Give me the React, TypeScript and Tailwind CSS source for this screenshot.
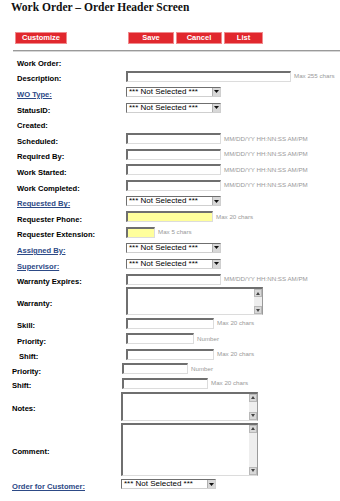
import React from 'react';

const labelFont = { fontFamily: '"Liberation Sans", Arial, sans-serif' };

const Hint = ({ children }: { children: React.ReactNode }) => (
    <span className="ml-[3px] text-[6.2px] leading-none text-[#999999] whitespace-nowrap">{children}</span>
);

const TextBox = ({ w, yellow }: { w: string; yellow?: boolean }) => (
    <div
        className={`${w} h-[11px] border-t-2 border-l-2 border-b border-r border-t-[#6f6f6f] border-l-[#6f6f6f] border-b-[#dcdcdc] border-r-[#dcdcdc] ${
            yellow ? 'bg-[#ffff9c]' : 'bg-white'
        }`}
    />
);

const Select = ({ w = 'w-[95px]' }: { w?: string }) => (
    <div className={`${w} h-[10px] flex items-stretch border border-t-[#6f6f6f] border-l-[#6f6f6f] border-b-[#cfcfcf] border-r-[#cfcfcf] bg-white`}>
        <span className="flex-1 pl-[2px] text-[8px] leading-[8px] text-black whitespace-nowrap overflow-hidden">
            *** Not Selected ***
        </span>
        <span className="w-[8px] bg-[#d8d8d8] border-l border-[#b0b0b0] flex items-center justify-center">
            <svg width="5" height="3" viewBox="0 0 5 3">
                <path d="M0 0h5L2.5 3z" fill="#111" />
            </svg>
        </span>
    </div>
);

const TextArea = ({ h, w }: { h: string; w: string }) => (
    <div className={`${w} ${h} flex border-t-2 border-l-2 border-b border-r border-t-[#6f6f6f] border-l-[#6f6f6f] border-b-[#dcdcdc] border-r-[#9a9a9a] bg-white`}>
        <div className="flex-1" />
        <div className="w-[8px] bg-[#eeeeee] flex flex-col justify-between">
            <span className="h-[8px] bg-[#d8d8d8] border border-[#b8b8b8] flex items-center justify-center">
                <svg width="4" height="3" viewBox="0 0 4 3">
                    <path d="M0 3h4L2 0z" fill="#444" />
                </svg>
            </span>
            <span className="h-[8px] bg-[#d8d8d8] border border-[#b8b8b8] flex items-center justify-center">
                <svg width="4" height="3" viewBox="0 0 4 3">
                    <path d="M0 0h4L2 3z" fill="#444" />
                </svg>
            </span>
        </div>
    </div>
);

const Row = ({
    label,
    link,
    h = 'h-[15.6px]',
    labelW = 'w-[126px]',
    pl = 'pl-[17px]',
    children,
}: {
    label: string;
    link?: boolean;
    h?: string;
    labelW?: string;
    pl?: string;
    children?: React.ReactNode;
}) => (
    <div className={`flex items-center ${h}`}>
        <div className={`${labelW} ${pl} shrink-0`}>
            <span
                className={`text-[7.6px] font-bold leading-none whitespace-nowrap ${
                    link ? 'text-[#2d4a86] underline' : 'text-black'
                }`}
            >
                {label}
            </span>
        </div>
        <div className="flex items-center">{children}</div>
    </div>
);

const RedButton = ({ label, w }: { label: string; w: string }) => (
    <div className={`${w} h-[12px] bg-[#e1272d] border border-[#f08a8d] flex items-center justify-center`}>
        <span className="text-white text-[7.5px] font-bold leading-none">{label}</span>
    </div>
);

export default function App() {
    const date = 'MM/DD/YY HH:NN:SS AM/PM';
    return (
        <div className="w-[340px] h-[501px] bg-white overflow-hidden" style={labelFont}>
            {/* Title */}
            <div className="pl-[11px] pt-[2px] h-[32px]">
                <h1
                    className="text-[11.5px] font-bold leading-[11px] text-[#111]"
                    style={{ fontFamily: '"Liberation Serif", "Times New Roman", serif' }}
                >
                    Work Order – Order Header Screen
                </h1>
            </div>

            {/* Toolbar */}
            <div className="flex h-[12px]">
                <div className="pl-[15px] w-[128px]">
                    <RedButton label="Customize" w="w-[52px]" />
                </div>
                <div className="flex gap-[2px]">
                    <RedButton label="Save" w="w-[46px]" />
                    <RedButton label="Cancel" w="w-[46px]" />
                    <RedButton label="List" w="w-[39px]" />
                </div>
            </div>
            <div className="ml-[13px] mt-[6px] border-t border-b border-t-[#9a9a9a] border-b-[#d6d6d6]" />

            {/* Form */}
            <div className="mt-[1px]">
                <Row label="Work Order:" />
                <Row label="Description:">
                    <TextBox w="w-[165px]" />
                    <Hint>Max 255 chars</Hint>
                </Row>
                <Row label="WO Type:" link>
                    <Select />
                </Row>
                <Row label="StatusID:">
                    <Select />
                </Row>
                <Row label="Created:" />
                <Row label="Scheduled:">
                    <TextBox w="w-[95px]" />
                    <Hint>{date}</Hint>
                </Row>
                <Row label="Required By:">
                    <TextBox w="w-[95px]" />
                    <Hint>{date}</Hint>
                </Row>
                <Row label="Work Started:">
                    <TextBox w="w-[95px]" />
                    <Hint>{date}</Hint>
                </Row>
                <Row label="Work Completed:">
                    <TextBox w="w-[95px]" />
                    <Hint>{date}</Hint>
                </Row>
                <Row label="Requested By:" link>
                    <Select />
                </Row>
                <Row label="Requester Phone:">
                    <TextBox w="w-[87px]" yellow />
                    <Hint>Max 20 chars</Hint>
                </Row>
                <Row label="Requester Extension:">
                    <TextBox w="w-[29px]" yellow />
                    <Hint>Max 5 chars</Hint>
                </Row>
                <Row label="Assigned By:" link>
                    <Select />
                </Row>
                <Row label="Supervisor:" link>
                    <Select />
                </Row>
                <Row label="Warranty Expires:">
                    <TextBox w="w-[95px]" />
                    <Hint>{date}</Hint>
                </Row>
                <Row label="Warranty:" h="h-[29px]">
                    <TextArea w="w-[137px]" h="h-[28px]" />
                </Row>
                <Row label="Skill:" h="h-[15px]">
                    <TextBox w="w-[88px]" />
                    <Hint>Max 20 chars</Hint>
                </Row>
                <Row label="Priority:" h="h-[16px]">
                    <TextBox w="w-[68px]" />
                    <Hint>Number</Hint>
                </Row>
                <Row label="Shift:" h="h-[15px]" pl="pl-[19px]">
                    <TextBox w="w-[88px]" />
                    <Hint>Max 20 chars</Hint>
                </Row>

                {/* Second block */}
                <Row label="Priority:" h="h-[14px]" labelW="w-[122px]" pl="pl-[12px]">
                    <TextBox w="w-[66px]" />
                    <Hint>Number</Hint>
                </Row>
                <Row label="Shift:" h="h-[15px]" labelW="w-[122px]" pl="pl-[12px]">
                    <TextBox w="w-[86px]" />
                    <Hint>Max 20 chars</Hint>
                </Row>
                <Row label="Notes:" h="h-[31px]" labelW="w-[121px]" pl="pl-[12px]">
                    <TextArea w="w-[137px]" h="h-[29px]" />
                </Row>
                <Row label="Comment:" h="h-[55px]" labelW="w-[121px]" pl="pl-[12px]">
                    <TextArea w="w-[137px]" h="h-[53px]" />
                </Row>
                <Row label="Order for Customer:" link h="h-[15px]" labelW="w-[121px]" pl="pl-[12px]">
                    <Select />
                </Row>
            </div>
        </div>
    );
}
